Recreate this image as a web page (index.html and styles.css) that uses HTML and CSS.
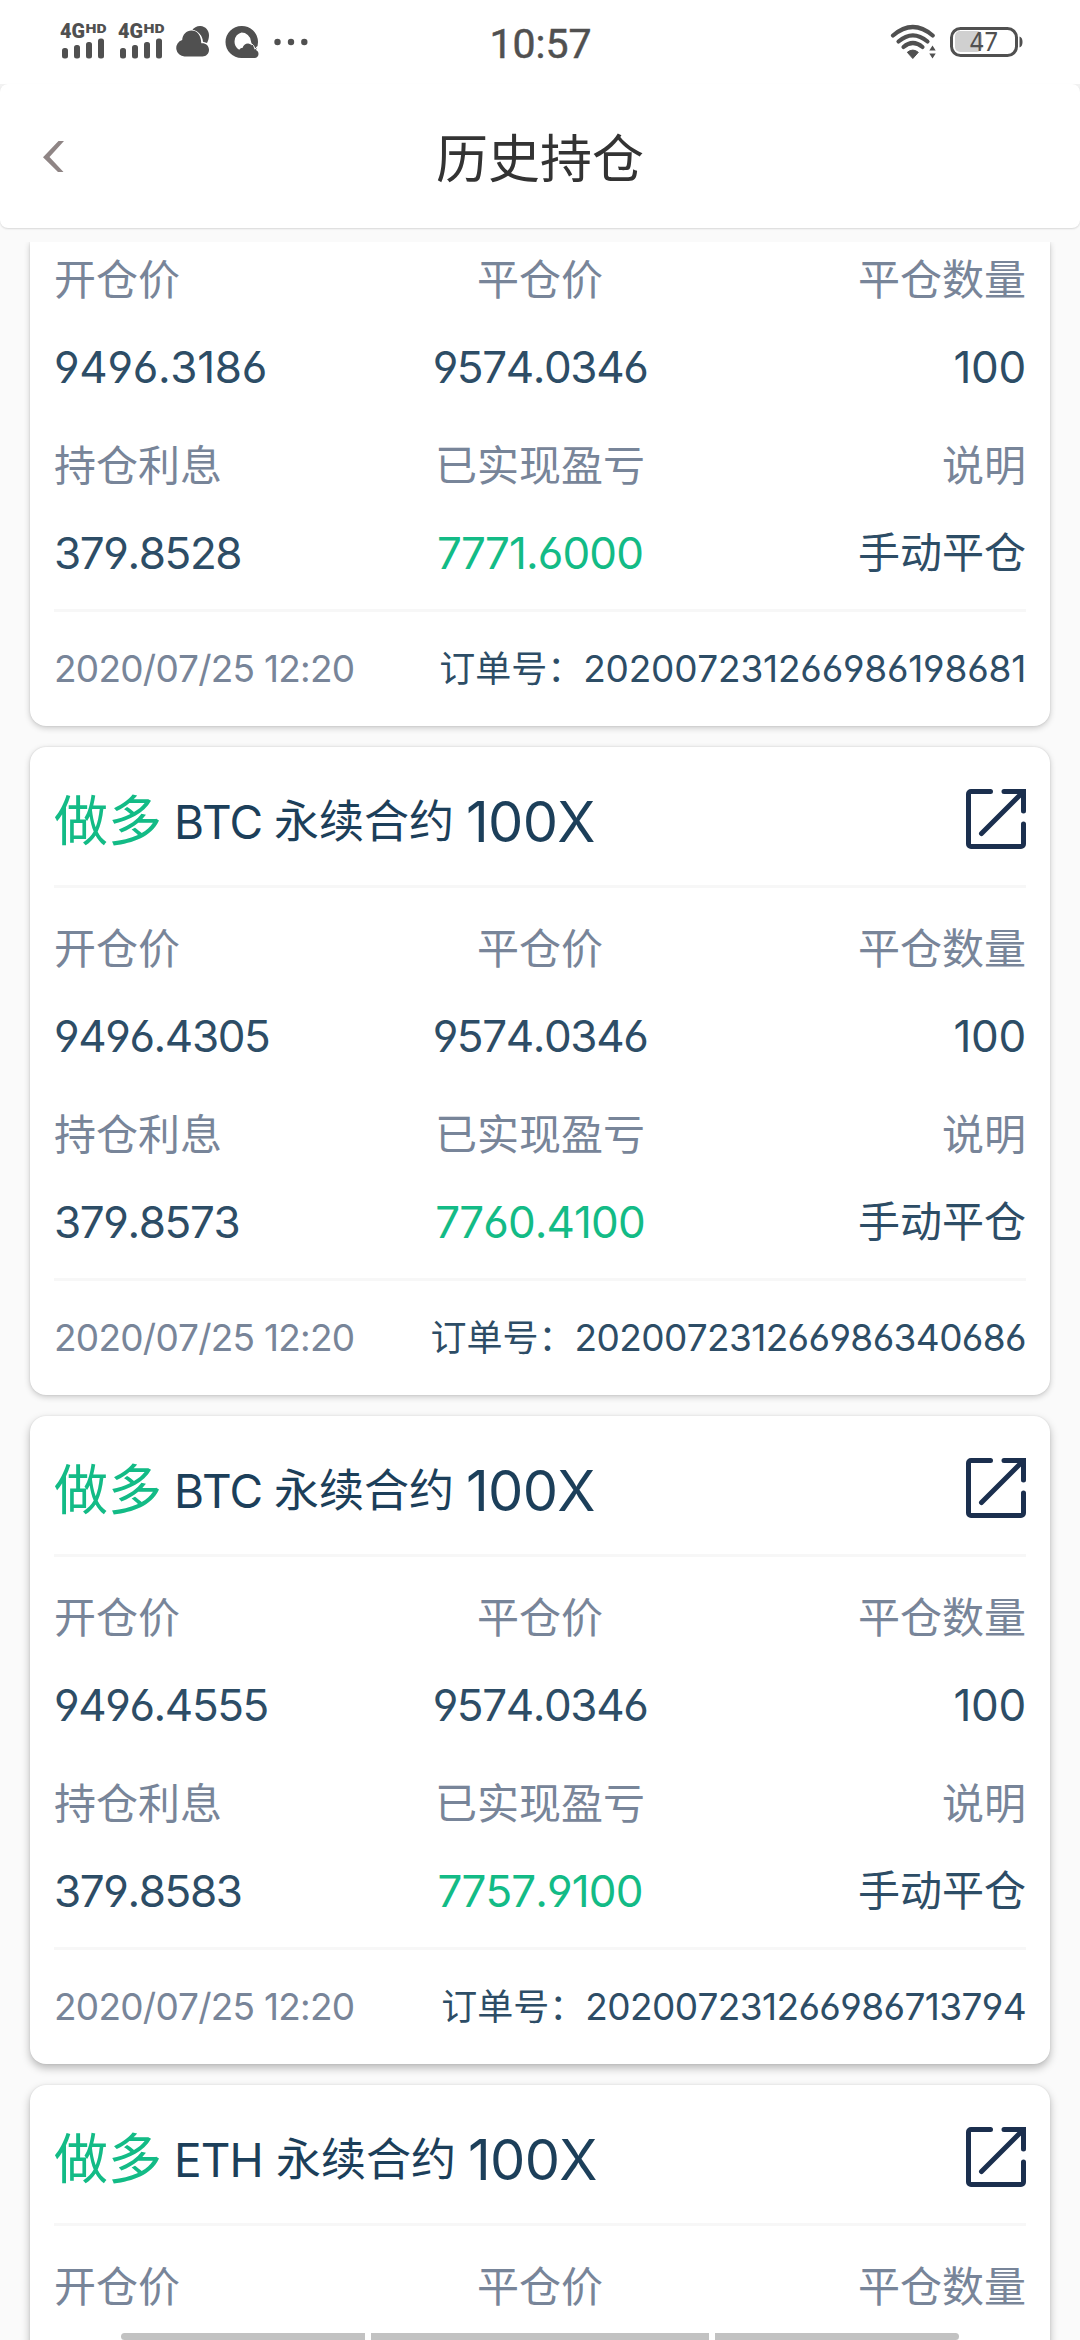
FILE: index.html
```html
<!DOCTYPE html>
<html lang="zh-CN">
<head>
<meta charset="utf-8">
<title>历史持仓</title>
<link rel="stylesheet" href="styles.css">
</head>
<body>
<svg class="defs" width="0" height="0" aria-hidden="true">
  <symbol id="open" viewBox="0 0 60 60">
    <path d="M24.500 2.500H5a2.500 2.500 0 0 0-2.500 2.500v50A2.500 2.500 0 0 0 5 57.500h50a2.500 2.500 0 0 0 2.500-2.500V35M38 2.500h19.500V22M57 3L15.500 44.500" fill="none" stroke="#1b2f4e" stroke-width="5" stroke-linecap="round"/>
    <path d="M50 0h10v10z" fill="#1b2f4e"/>
  </symbol>
  <symbol id="bars" viewBox="0 0 48 38">
    <g fill="#505050">
      <rect x="2" y="25" width="6" height="10.500" rx="2.500"/>
      <rect x="14" y="22" width="6" height="13.500" rx="2.500"/>
      <rect x="26" y="19" width="6" height="16.500" rx="2.500"/>
      <rect x="38" y="15.500" width="6" height="20" rx="2.500"/>
    </g>
  </symbol>
</svg>
<div class="screen">
  <div class="status">
    <div class="status-left">
      <svg class="signal" width="48" height="38" viewBox="0 0 48 38">
        <text x="0" y="14.500" class="net" font-size="20" textLength="25" lengthAdjust="spacingAndGlyphs">4G</text>
        <text x="25.500" y="9.500" class="net" font-size="13" textLength="21" lengthAdjust="spacingAndGlyphs">HD</text>
        <use href="#bars"/>
      </svg>
      <svg class="signal" width="48" height="38" viewBox="0 0 48 38">
        <text x="0" y="14.500" class="net" font-size="20" textLength="25" lengthAdjust="spacingAndGlyphs">4G</text>
        <text x="25.500" y="9.500" class="net" font-size="13" textLength="21" lengthAdjust="spacingAndGlyphs">HD</text>
        <use href="#bars"/>
      </svg>
      <svg class="cloud" width="34" height="34" viewBox="0 0 34 34">
        <path d="M16 5.500C18 2.500 21 .8 24.500 1c5 .3 8.700 4.500 8.500 9.500-.1 3-.8 5.200-2 7.500l-4-1.200C26.600 10.500 22.500 6 16 5.500z" fill="#505050"/>
        <path d="M8.500 31.500a8.500 8.500 0 0 1-2.300-16.600C6.500 9.500 10.500 5.500 15.500 5.500c5.500 0 9.500 4.500 9.800 12.800 4.500-.3 7.700 2.500 7.700 6.500s-3 6.700-6.500 6.700z" fill="#505050" stroke="#fff" stroke-width="1.500" paint-order="stroke"/>
      </svg>
      <svg class="browser" width="34" height="34" viewBox="0 0 34 34">
        <path d="M16.500 1a16 16 0 1 0 0 32H29.500c2.500 0 4-1.800 4-4s-1-3.200-2.500-4a16 16 0 0 0 2-8A16 16 0 0 0 16.500 1zm0 6.500a9.500 9.500 0 0 1 9.400 8.500l1.100 4.500c-1-1.300-2.300-2-4-2-2.800 0-4.600 1.700-5.300 4.300-1.500 0-2.500.8-3.500 2A9.500 9.500 0 0 1 16.500 7.500z" fill="#505050" fill-rule="evenodd"/>
        <path d="M24.500 18.500c2 .2 3.200.8 4.200 2.200l1.300 3.500 2.500-3" fill="none" stroke="#fff" stroke-width="1"/>
      </svg>
      <svg width="34" height="8" viewBox="0 0 34 8" fill="#505050"><circle cx="3.500" cy="4" r="3.200"/><circle cx="17" cy="4" r="3.200"/><circle cx="30.300" cy="4" r="3.200"/></svg>
    </div>
    <div class="clock">10:57</div>
    <div class="status-right">
      <svg class="wifi" width="48" height="36" viewBox="0 0 48 36">
        <g fill="none" stroke="#505050" stroke-width="4.200" stroke-linecap="round">
          <path d="M3 11.500Q22.800-5.500 42.700 11.500"/>
          <path d="M8.500 17.500Q22.800 5.200 37.500 17.500"/>
          <path d="M13.500 23Q22.800 15 32.500 23"/>
        </g>
        <path d="M17.300 28.300q5.500-4.400 11 0L22.800 34.500z" fill="#505050" stroke="#505050" stroke-linejoin="round"/>
        <path d="M42.500 21.500l3.200 5h-6.400zM42.500 34.500l3.200-5h-6.400z" fill="#505050"/>
      </svg>
      <svg class="battery" width="74" height="32" viewBox="0 0 74 32">
        <rect x="5" y="5" width="27" height="21" rx="5" fill="#d0d0d0"/>
        <rect x="1.500" y="2.500" width="65" height="27" rx="9" fill="none" stroke="#505050" stroke-width="3"/>
        <path d="M69.500 10.500c2 .5 3 2.500 3 5.500s-1 5-3 5.500z" fill="#505050"/>
        <text x="19" y="25" class="level" textLength="29" lengthAdjust="spacingAndGlyphs">47</text>
      </svg>
    </div>
  </div>
  <div class="corners">
    <header class="topbar">
      <svg class="back" width="22" height="31" viewBox="0 0 22 31"><path d="M15.500 0H21L6.500 16 20.500 31H15L0 16.300z" fill="#8f8585"/></svg>
      <h1 class="title">历史持仓</h1>
    </header>
  </div>
  <main class="list">
    <section class="card card-cut">
      <div class="fields">
        <span class="label">开仓价</span><span class="label">平仓价</span><span class="label">平仓数量</span>
        <span class="value wide">9496.3186</span><span class="value">9574.0346</span><span class="value wide">100</span>
        <span class="label">持仓利息</span><span class="label">已实现盈亏</span><span class="label">说明</span>
        <span class="value">379.8528</span><span class="value profit">7771.6000</span><span class="value note">手动平仓</span>
      </div>
      <div class="foot"><span class="date">2020/07/25 12:20</span><span class="order order-wide"><span class="order-name">订单号：</span>202007231266986198681</span></div>
    </section>
    <section class="card">
      <div class="head">
        <span class="side">做多</span><span class="coin">BTC</span><span class="contract">永续合约</span><span class="lever">100X</span>
        <svg class="open" width="60" height="60"><use href="#open"/></svg>
      </div>
      <div class="fields">
        <span class="label">开仓价</span><span class="label">平仓价</span><span class="label">平仓数量</span>
        <span class="value">9496.4305</span><span class="value">9574.0346</span><span class="value wide">100</span>
        <span class="label">持仓利息</span><span class="label">已实现盈亏</span><span class="label">说明</span>
        <span class="value">379.8573</span><span class="value profit">7760.4100</span><span class="value note">手动平仓</span>
      </div>
      <div class="foot"><span class="date">2020/07/25 12:20</span><span class="order"><span class="order-name">订单号：</span>202007231266986340686</span></div>
    </section>
    <section class="card card-low">
      <div class="head">
        <span class="side">做多</span><span class="coin">BTC</span><span class="contract">永续合约</span><span class="lever">100X</span>
        <svg class="open" width="60" height="60"><use href="#open"/></svg>
      </div>
      <div class="fields">
        <span class="label">开仓价</span><span class="label">平仓价</span><span class="label">平仓数量</span>
        <span class="value">9496.4555</span><span class="value">9574.0346</span><span class="value wide">100</span>
        <span class="label">持仓利息</span><span class="label">已实现盈亏</span><span class="label">说明</span>
        <span class="value">379.8583</span><span class="value profit">7757.9100</span><span class="value note">手动平仓</span>
      </div>
      <div class="foot"><span class="date">2020/07/25 12:20</span><span class="order"><span class="order-name">订单号：</span>202007231266986713794</span></div>
    </section>
    <section class="card card-low">
      <div class="head">
        <span class="side">做多</span><span class="coin coin-eth">ETH</span><span class="contract">永续合约</span><span class="lever">100X</span>
        <svg class="open" width="60" height="60"><use href="#open"/></svg>
      </div>
      <div class="fields">
        <span class="label">开仓价</span><span class="label">平仓价</span><span class="label">平仓数量</span>
      </div>
    </section>
  </main>
  <div class="gesture"><i></i><i></i><i></i></div>
</div>
</body>
</html>
```
FILE: styles.css
```css
* { box-sizing: border-box; }
body {
  margin: 0;
  background: #fafafa;
  font-family: Inter, "Noto Sans CJK SC", sans-serif;
  font-feature-settings: "cv03", "cv04";
  font-kerning: none;
}
.defs { display: block; }
.screen {
  position: relative;
  width: 1080px;
  height: 2340px;
  overflow: hidden;
  display: flex;
  flex-direction: column;
}

.status {
  height: 84px;
  flex: none;
  background: #fff;
  display: grid;
  grid-template-columns: 1fr auto 1fr;
  align-items: center;
  padding: 0 60px;
}
.status-left, .status-right { display: flex; align-items: center; }
.status-right { justify-content: flex-end; }
.signal { margin-right: 10px; overflow: visible; }
.net { font-family: Roboto, sans-serif; font-weight: 900; fill: #505050; }
.cloud { margin-right: 15px; }
.browser { margin-right: 15px; }
.clock { font: 400 41px/44px Roboto, sans-serif; color: #505050; letter-spacing: 0; padding: 4px 0 0 1px; -webkit-text-stroke: 0.5px #505050; }
.wifi { margin-right: 12px; }
.battery { margin-right: -4px; }
.level { font: 26px Inter, sans-serif; fill: #505050; }

.corners { flex: none; background: linear-gradient(#f2f2f2 50%, #fafafa 50%); }
.topbar {
  height: 144px;
  background: #fff;
  border-radius: 8px;
  box-shadow: 0 1px 2px rgba(0, 0, 0, 0.14);
  display: grid;
  grid-template-columns: 1fr auto 1fr;
  align-items: center;
  padding: 0 43px;
}
.title { margin: 0; padding-top: 7px; font-size: 52px; line-height: 60px; font-weight: 400; color: #333; }

.list {
  margin-top: 14px;
  padding: 0 30px;
  flex: 1;
  overflow: hidden;
  display: flex;
  flex-direction: column;
  gap: 21px;
}
.card {
  flex: none;
  height: 648px;
  padding: 0 24px;
  background: #fff;
  border-radius: 16px;
  box-shadow: 0 2px 6px rgba(0, 0, 0, 0.2), 0 0 2px rgba(0, 0, 0, 0.12);
}
.card-cut { height: 484px; border-radius: 0 0 16px 16px; }
.card-low { box-shadow: 0 4px 8px rgba(0, 0, 0, 0.27), 0 0 2px rgba(0, 0, 0, 0.1); }

.head {
  height: 141px;
  border-bottom: 3px solid #f7f7f7;
  display: flex;
  align-items: center;
  color: #1c3f5a;
  line-height: 60px;
}
.head > span { padding-top: 12px; }
.side { font-size: 54px; color: #13bb86; }
.coin { margin-left: 12px; width: 100px; font-size: 46px; letter-spacing: -2.2px; }
.coin-eth { width: 102px; letter-spacing: -0.9px; }
.contract { font-size: 45px; }
.lever { margin-left: 12px; font-size: 56px; letter-spacing: -0.7px; }
.open { margin: 6px 0 0 auto; }

.fields {
  height: 390px;
  padding: 23px 0 17px;
  display: grid;
  grid-template-columns: repeat(3, 1fr);
  grid-template-rows: 75px 100px 97px 78px;
  align-items: center;
}
.card-cut .fields { height: 367px; padding-top: 0; }
.fields > :nth-child(3n+2) { text-align: center; }
.fields > :nth-child(3n) { text-align: right; }
.label { font-size: 42px; line-height: 48px; color: #788599; }
.value { font-size: 44px; line-height: 48px; letter-spacing: -1.4px; color: #2d4d66; }
.wide { letter-spacing: -0.3px; }
.note { font-size: 42px; letter-spacing: 0; }
.profit { color: #13bb86; letter-spacing: -0.9px; }

.foot {
  border-top: 3px solid #f7f7f7;
  height: 117px;
  display: flex;
  justify-content: space-between;
  align-items: center;
  font-size: 37px;
  line-height: 44px;
  letter-spacing: -0.6px;
}
.date { color: #788599; letter-spacing: -0.75px; }
.order { color: #2d4d66; }
.order-wide { letter-spacing: -0.2px; }
.order-name { font-size: 36px; letter-spacing: 0; }

.gesture {
  position: absolute;
  left: 121px;
  bottom: 0;
  width: 838px;
  height: 7px;
  display: grid;
  grid-template-columns: 244px 338px 244px;
  gap: 6px;
}
.gesture i { background: #c2c2c2; }
.gesture i:first-child { border-radius: 4px 0 0 4px; }
.gesture i:last-child { border-radius: 0 4px 4px 0; }
```
